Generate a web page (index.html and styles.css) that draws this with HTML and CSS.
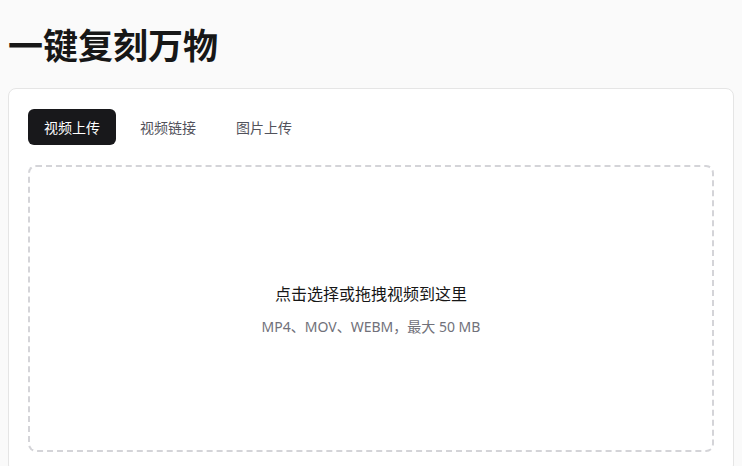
FILE: index.html
```html
<!DOCTYPE html>
<html lang="zh">
<head>
<meta charset="utf-8">
<link rel="stylesheet" href="styles.css">
</head>
<body>
<main class="page">
  <h1 class="title">一键复刻万物</h1>
  <section class="card">
    <nav class="tabs">
      <button class="tab tab-active">视频上传</button>
      <button class="tab">视频链接</button>
      <button class="tab">图片上传</button>
    </nav>
    <div class="dropzone">
      <p class="drop-main">点击选择或拖拽视频到这里</p>
      <p class="drop-sub">MP4、MOV、WEBM，最大 50 MB</p>
    </div>
  </section>
</main>
</body>
</html>
```
FILE: styles.css
```css
html, body {
  margin: 0;
  padding: 0;
  background: #fafafa;
}
body {
  font-family: "Noto Sans CJK SC", "Noto Sans", sans-serif;
  color: #171717;
  overflow: hidden;
}
.page {
  padding: 24px 8px 0;
}
.title {
  margin: 0 0 24px;
  font-size: 35px;
  line-height: 40px;
  font-weight: 700;
  color: #171717;
}
.card {
  background: #ffffff;
  border: 1px solid #e5e5e5;
  border-radius: 8px;
  padding: 20px 19px;
}
.tabs {
  display: flex;
  gap: 8px;
}
.tab {
  font-family: inherit;
  font-size: 14px;
  line-height: 20px;
  padding: 8px 16px;
  border: 0;
  border-radius: 6px;
  background: transparent;
  color: #52525b;
}
.tab-active {
  background: #18181b;
  color: #ffffff;
}
.dropzone {
  margin-top: 20px;
  height: 283px;
  border: 2px dashed #d4d4d8;
  border-radius: 8px;
  display: flex;
  flex-direction: column;
  align-items: center;
  justify-content: center;
}
.drop-main {
  margin: 0;
  font-size: 16px;
  line-height: 24px;
  color: #171717;
}
.drop-sub {
  margin: 12px 0 0;
  font-family: "Noto Sans", "Noto Sans CJK SC", sans-serif;
  font-size: 14px;
  line-height: 20px;
  color: #71717a;
}
```
